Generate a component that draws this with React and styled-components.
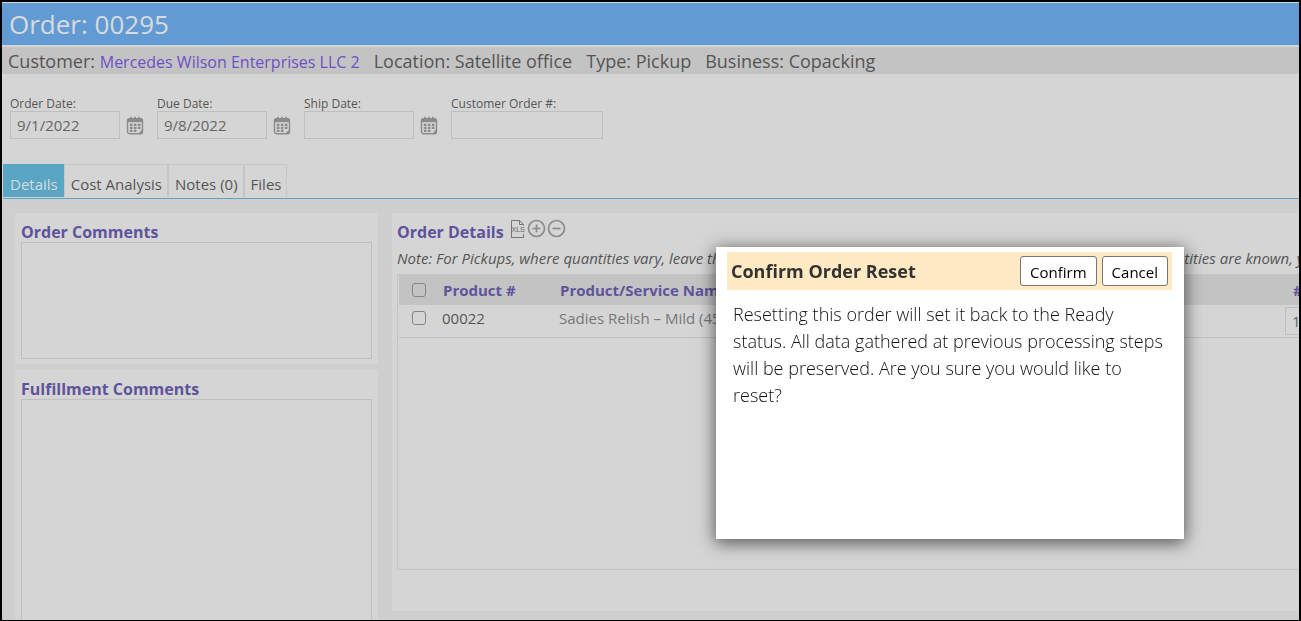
import React from 'react';
import styled, { createGlobalStyle } from 'styled-components';

const Global = createGlobalStyle`
  *, *::before, *::after { box-sizing: border-box; }
  body { margin: 0; background: #d5d5d5; overflow: hidden; }
  body, button, input, textarea, table { font-family: 'Open Sans', 'Segoe UI', sans-serif; font-weight: 400; }
  h1, h2, p { margin: 0; }
`;

const Frame = styled.div`
  height: 100vh;
  overflow: hidden;
  display: flex;
  flex-direction: column;
  background: #d5d5d5;
  border: 2px solid #000;
  border-bottom-width: 1px;
  box-shadow: inset 0 -1px #555;
  color: #555;
`;

const TitleBar = styled.header`
  flex: none;
  height: 42px;
  margin: 1px 0 2px;
  padding: 0 7px;
  display: flex;
  align-items: center;
  background: #629bd3;
  color: #d8dadd;
`;

const Title = styled.h1`
  font-size: 26px;
  font-weight: 400;
  line-height: 40px;
`;

const InfoBar = styled.div`
  flex: none;
  height: 27px;
  padding: 1px 6px 0;
  display: flex;
  align-items: center;
  gap: 14px;
  background: #c3c3c3;
  font-size: 18px;
  line-height: 26px;
  white-space: nowrap;
`;

const CustomerLink = styled.a`
  font-size: 16px;
  color: #6f4fc6;
  text-decoration: none;
`;

const DateBar = styled.form`
  flex: none;
  padding: 23px 8px 0;
  display: flex;
`;

const Field = styled.div`
  display: flex;
  flex-direction: column;
  width: ${(p) => p.$width}px;
`;

const FieldLabel = styled.label`
  font-size: 12px;
  line-height: 14px;
`;

const FieldRow = styled.div`
  display: flex;
  align-items: center;
  gap: 6px;
`;

const TextInput = styled.input`
  width: ${(p) => p.$width}px;
  height: 28px;
  padding: 0 6px;
  border: 1px solid #bfbfbf;
  background: transparent;
  color: #666;
  font-size: 15px;
`;

const IconButton = styled.button`
  display: flex;
  padding: 0;
  border: 0;
  background: none;
  color: #8b8b8b;
`;

const Tabs = styled.nav`
  flex: none;
  height: 35px;
  margin: 25px 0 0 1px;
  display: flex;
  align-items: flex-start;
  border-bottom: 1px solid #58a5c4;
`;

const Tab = styled.button`
  height: 33px;
  padding: 6px 5px 0 6px;
  border: 1px solid ${(p) => (p.$active ? '#58a5c4' : '#c6c6c6')};
  border-bottom: 0;
  background: ${(p) => (p.$active ? '#58a5c4' : 'transparent')};
  color: ${(p) => (p.$active ? '#d8dadd' : '#555')};
  font-size: 15px;
  line-height: 24px;
  white-space: nowrap;
`;

const Workspace = styled.main`
  flex: 1;
  min-height: 0;
  padding: 14px 0 0 13px;
  display: flex;
  align-items: flex-start;
  gap: 14px;
  background: #cfcfcf;
`;

const CommentsColumn = styled.div`
  flex: none;
  width: 363px;
  display: flex;
  flex-direction: column;
  gap: 6px;
`;

const Panel = styled.section`
  background: #d5d5d5;
  padding: 6px;
`;

const CommentsPanel = styled(Panel)`
  padding: 9px 6px 5px;
`;

const Heading = styled.h2`
  color: #5f539b;
  font-size: 16px;
  font-weight: 700;
  line-height: 20px;
  white-space: nowrap;
`;

const CommentBox = styled.textarea`
  display: block;
  width: 351px;
  height: ${(p) => p.$height}px;
  resize: none;
  border: 1px solid #bfbfbf;
  background: transparent;
`;

const DetailsPanel = styled(Panel)`
  flex: 1;
  min-width: 0;
  height: 398px;
  padding: 6px 0 0 5px;
  overflow: hidden;
`;

const DetailsHeader = styled.div`
  height: 24px;
  display: flex;
  align-items: flex-start;
  gap: 6px;
`;

const DetailsTitle = styled(Heading)`
  padding-top: 3px;
`;

const Tools = styled.div`
  display: flex;
  gap: 1px;
`;

const Note = styled.p`
  height: 31px;
  font-size: 15px;
  font-style: italic;
  line-height: 30px;
  white-space: nowrap;
`;

const Grid = styled.div`
  height: 296px;
  padding-left: 1px;
  border: 1px solid #c4c4c4;
  border-right: 0;
  overflow: hidden;
`;

const Table = styled.table`
  width: 100%;
  min-width: 900px;
  table-layout: fixed;
  border-collapse: collapse;
  text-align: left;
  white-space: nowrap;
`;

const Th = styled.th`
  width: ${(p) => (p.$width ? `${p.$width}px` : 'auto')};
  height: 30px;
  padding: 0 0 0 ${(p) => p.$pad || 0}px;
  background: #c3c3c3;
  color: #5f539b;
  font-size: 15px;
  font-weight: 700;
`;

const Td = styled.td`
  height: 32px;
  padding: 0 0 6px ${(p) => p.$pad || 0}px;
  border-bottom: 1px solid #bfbfbf;
  color: ${(p) => (p.$muted ? '#777' : '#555')};
  font-size: 15px;
`;

const QuantityCell = styled(Td)`
  padding: 0;
`;

const CheckBox = styled.input`
  appearance: none;
  display: block;
  width: 14px;
  height: 14px;
  margin: 0;
  border: 1px solid #858585;
  border-radius: 3px;
`;

const Quantity = styled(TextInput)`
  display: block;
`;

const Overlay = styled.div`
  position: fixed;
  inset: 0;
  display: flex;
  justify-content: flex-end;
  align-items: flex-start;
  padding: 247px 117px 0 0;
`;

const Dialog = styled.section`
  width: 468px;
  min-height: 292px;
  padding: 5px 12px 12px 11px;
  background: #fff;
  color: #111;
  box-shadow: 0 3px 16px 1px rgba(0, 0, 0, 0.6);
`;

const DialogHeader = styled.header`
  height: 38px;
  padding: 0 4px;
  display: flex;
  align-items: center;
  gap: 5px;
  background: #ffeac3;
`;

const DialogTitle = styled.h2`
  flex: 1;
  color: #333;
  font-size: 18px;
  font-weight: 700;
`;

const DialogButton = styled.button`
  height: 30px;
  padding: 2px 9px 0;
  border: 1px solid #767676;
  border-radius: 3px;
  background: #fff;
  color: #000;
  font-size: 15px;
`;

const DialogText = styled.p`
  padding: 11px 4px 0 6px;
  font-size: 18px;
  font-weight: 300;
  line-height: 27px;
`;

const calendarDots = [
  [4, 8], [8, 8], [12, 8],
  [4, 11], [8, 11], [12, 11],
  [4, 14], [8, 14],
];

function CalendarIcon() {
  return (
    <svg width="18" height="19" viewBox="0 0 18 19" fill="none" aria-hidden="true">
      <rect x="1.5" y="2.700" width="15" height="15" rx="2" stroke="currentColor" strokeWidth="1.4" />
      <path d="M1.500 3h15v3.200h-15z" fill="currentColor" />
      <path d="M5 .8v3M9 .8v3M13 .8v3" stroke="currentColor" strokeWidth="1.6" />
      {calendarDots.map(([x, y]) => (
        <rect key={`${x}-${y}`} x={x - 0.2} y={y - 0.3} width="2.700" height="2.300" fill="currentColor" />
      ))}
      <path d="M16.500 13l-4 4.500h4z" fill="currentColor" />
    </svg>
  );
}

function XlsIcon() {
  return (
    <svg width="16" height="20" viewBox="0 0 16 20" fill="none" aria-hidden="true">
      <path d="M1.500 19V1.500H9.500L13.500 5.500V6.500M13.500 15V18.500M9.500 1.500V5.500H13.500M1.500 18.500H14" stroke="#777" />
      <text x="1.500" y="13" fontSize="7" fontFamily="Liberation Sans, sans-serif" fill="#666">XLS</text>
    </svg>
  );
}

function CircleIcon({ plus }) {
  return (
    <svg width="19" height="20" viewBox="0 0 19 20" fill="none" aria-hidden="true">
      <circle cx="9.500" cy="9.500" r="8" stroke="currentColor" strokeWidth="1.700" />
      <path d={plus ? 'M5.500 9.500h8M9.500 5.500v8' : 'M5.500 9.500h8'} stroke="currentColor" strokeWidth="1.700" />
    </svg>
  );
}

function DateField({ id, label, value = '' }) {
  return (
    <Field $width={147}>
      <FieldLabel htmlFor={id}>{label}</FieldLabel>
      <FieldRow>
        <TextInput id={id} $width={110} defaultValue={value} />
        <IconButton type="button" aria-label={`Pick ${label}`}><CalendarIcon /></IconButton>
      </FieldRow>
    </Field>
  );
}

export default function App() {
  return (
    <>
      <Global />
      <Frame>
        <TitleBar><Title>Order: 00295</Title></TitleBar>
        <InfoBar>
          <span>Customer: <CustomerLink href="#customer">Mercedes Wilson Enterprises LLC 2</CustomerLink></span>
          <span>Location: Satellite office</span>
          <span>Type: Pickup</span>
          <span>Business: Copacking</span>
        </InfoBar>
        <DateBar>
          <DateField id="order-date" label="Order Date:" value="9/1/2022" />
          <DateField id="due-date" label="Due Date:" value="9/8/2022" />
          <DateField id="ship-date" label="Ship Date:" />
          <Field $width={152}>
            <FieldLabel htmlFor="customer-order">Customer Order #:</FieldLabel>
            <TextInput id="customer-order" $width={152} />
          </Field>
        </DateBar>
        <Tabs>
          <Tab type="button" $active>Details</Tab>
          <Tab type="button">Cost Analysis</Tab>
          <Tab type="button">Notes (0)</Tab>
          <Tab type="button">Files</Tab>
        </Tabs>
        <Workspace>
          <CommentsColumn>
            <CommentsPanel>
              <Heading><label htmlFor="order-comments">Order Comments</label></Heading>
              <CommentBox id="order-comments" $height={117} />
            </CommentsPanel>
            <CommentsPanel>
              <Heading><label htmlFor="fulfillment-comments">Fulfillment Comments</label></Heading>
              <CommentBox id="fulfillment-comments" $height={240} />
            </CommentsPanel>
          </CommentsColumn>
          <DetailsPanel>
            <DetailsHeader>
              <DetailsTitle>Order Details</DetailsTitle>
              <Tools>
                <IconButton type="button" aria-label="Export to XLS"><XlsIcon /></IconButton>
                <IconButton type="button" aria-label="Add"><CircleIcon plus /></IconButton>
                <IconButton type="button" aria-label="Remove"><CircleIcon /></IconButton>
              </Tools>
            </DetailsHeader>
            <Note>Note: For Pickups, where quantities vary, leave the quantities blank until the order is picked up by customer. If the quantities are known, you</Note>
            <Grid>
              <Table>
                <thead>
                  <tr>
                    <Th $width={43} $pad={13}><CheckBox type="checkbox" aria-label="Select all" /></Th>
                    <Th $width={117} $pad={1}>Product #</Th>
                    <Th $pad={1}>Product/Service Name</Th>
                    <Th $width={14} $pad={8}>#</Th>
                  </tr>
                </thead>
                <tbody>
                  <tr>
                    <Td $pad={13}><CheckBox type="checkbox" aria-label="Select 00022" /></Td>
                    <Td>00022</Td>
                    <Td $muted>Sadies Relish – Mild (45</Td>
                    <QuantityCell><Quantity $width={60} defaultValue="1" aria-label="Quantity" /></QuantityCell>
                  </tr>
                </tbody>
              </Table>
            </Grid>
          </DetailsPanel>
        </Workspace>
      </Frame>
      <Overlay>
        <Dialog role="dialog" aria-modal="true" aria-labelledby="dialog-title">
          <DialogHeader>
            <DialogTitle id="dialog-title">Confirm Order Reset</DialogTitle>
            <DialogButton type="button">Confirm</DialogButton>
            <DialogButton type="button">Cancel</DialogButton>
          </DialogHeader>
          <DialogText>
            Resetting this order will set it back to the Ready status. All data gathered at previous processing steps will be preserved. Are you sure you would like to reset?
          </DialogText>
        </Dialog>
      </Overlay>
    </>
  );
}
